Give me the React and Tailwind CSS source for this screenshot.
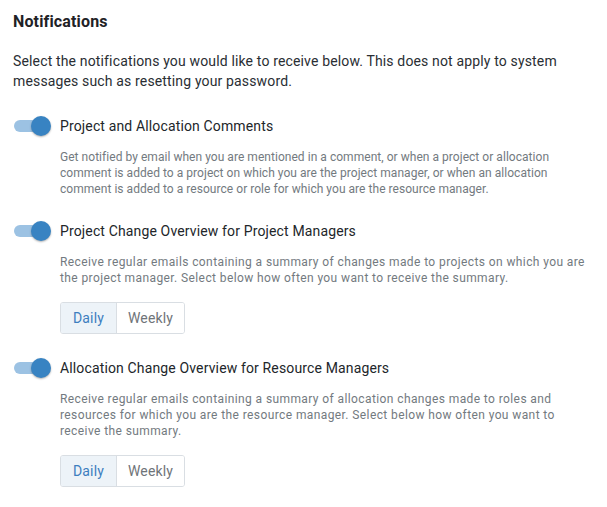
import React from "react";

function Toggle() {
  return (
    <div className="relative w-[38px] h-[20px] shrink-0">
      <div className="absolute left-[1px] top-[4px] w-[36px] h-[12px] rounded-full bg-[#9cc2e3]" />
      <div className="absolute left-[18px] top-0 w-[20px] h-[20px] rounded-full bg-[#3883c2] shadow-[0_1px_2px_rgba(0,0,0,0.3)]" />
    </div>
  );
}

function Segmented() {
  return (
    <div className="mt-[16px] flex w-[125px] h-[32px] rounded-[3px] border border-[#d9dee3] overflow-hidden text-[14px] tracking-[0.15px]">
      <div className="w-[56px] flex items-center justify-center bg-[#edf3f8] text-[#3d7ebf] border-r border-[#d9dee3]">Daily</div>
      <div className="flex-1 flex items-center justify-center bg-white text-[#6f7479]">Weekly</div>
    </div>
  );
}

function Section({ title, desc, buttons, className, descClass }) {
  return (
    <div className={className}>
      <div className="flex items-center gap-[9px]">
        <Toggle />
        <div className="text-[14px] leading-[20px] tracking-[0.14px] text-[#22262a]">{title}</div>
      </div>
      <div className="pl-[47px]">
        <p className={"mt-[13px] text-[12px] leading-[16px] text-[#737a80] max-w-[534px] " + descClass}>{desc}</p>
        {buttons && <Segmented />}
      </div>
    </div>
  );
}

export default function App() {
  return (
    <div className="w-[607px] h-[507px] bg-white px-[13px] pt-[12px] font-['Roboto',sans-serif]">
      <h2 className="text-[16px] leading-[20px] font-bold tracking-[0.15px] text-[#1f2226]">Notifications</h2>
      <p className="mt-[19px] text-[14px] leading-[20px] tracking-[0.15px] text-[#2a2e33]">
        Select the notifications you would like to receive below. This does not apply to system messages such as resetting your password.
      </p>
      <Section
        className="mt-[25px]"
        descClass="tracking-[0.04px]"
        title="Project and Allocation Comments"
        desc="Get notified by email when you are mentioned in a comment, or when a project or allocation comment is added to a project on which you are the project manager, or when an allocation comment is added to a resource or role for which you are the resource manager."
      />
      <Section
        className="mt-[24px]"
        descClass="tracking-[0.4px]"
        title="Project Change Overview for Project Managers"
        desc="Receive regular emails containing a summary of changes made to projects on which you are the project manager. Select below how often you want to receive the summary."
        buttons
      />
      <Section
        className="mt-[24px]"
        descClass="tracking-[0.4px]"
        title="Allocation Change Overview for Resource Managers"
        desc="Receive regular emails containing a summary of allocation changes made to roles and resources for which you are the resource manager. Select below how often you want to receive the summary."
        buttons
      />
    </div>
  );
}
